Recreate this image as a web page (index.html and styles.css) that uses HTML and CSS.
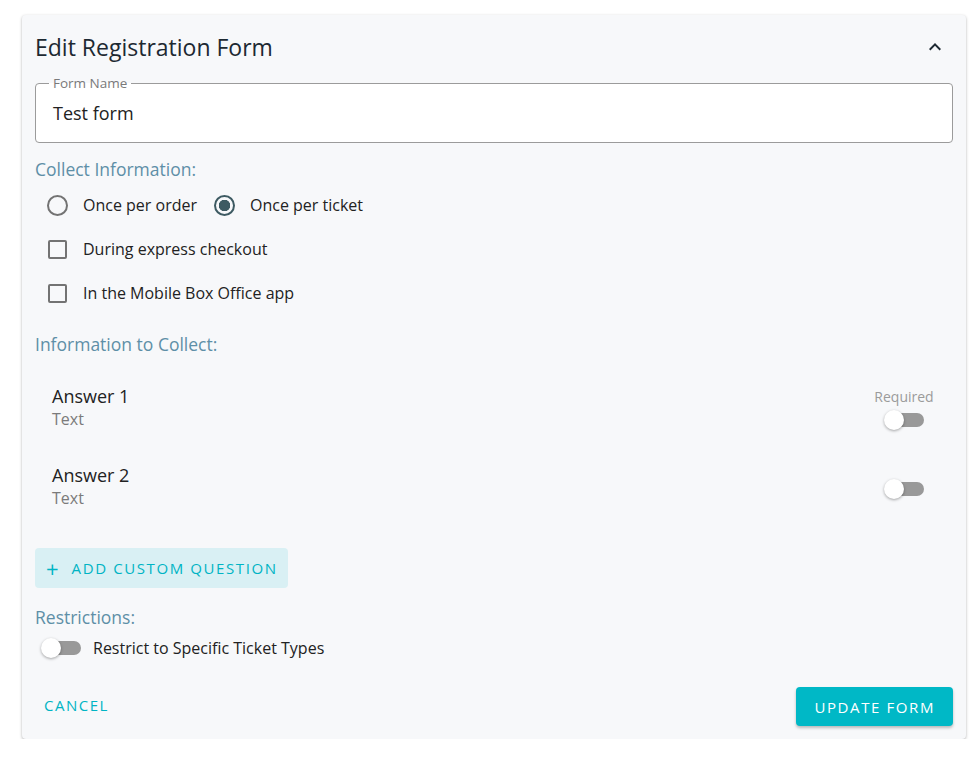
FILE: index.html
```html
<!DOCTYPE html>
<html lang="en">
<head>
    <meta charset="UTF-8">
    <meta name="viewport" content="width=device-width, initial-scale=1.0">
    <title>Edit Registration Form</title>
    <link rel="stylesheet" href="styles.css">
</head>
<body>

    <div class="card">
        <div class="card-header">
            <h1>Edit Registration Form</h1>
            <button class="collapse" aria-label="Collapse">
                <svg viewBox="0 0 24 24" width="24" height="24"><path d="M12 8l-6 6 1.41 1.41L12 10.83l4.59 4.58L18 14z"/></svg>
            </button>
        </div>

        <div class="field">
            <span class="field-label">Form Name</span>
            <span class="field-value">Test form</span>
        </div>

        <h2 class="section-title">Collect Information:</h2>
        <div class="option-row">
            <label class="option">
                <span class="control"><span class="radio"></span></span>
                <span class="option-text">Once per order</span>
            </label>
            <label class="option">
                <span class="control"><span class="radio checked"></span></span>
                <span class="option-text">Once per ticket</span>
            </label>
        </div>
        <div class="option-row">
            <label class="option">
                <span class="control"><span class="checkbox"></span></span>
                <span class="option-text">During express checkout</span>
            </label>
        </div>
        <div class="option-row">
            <label class="option">
                <span class="control"><span class="checkbox"></span></span>
                <span class="option-text">In the Mobile Box Office app</span>
            </label>
        </div>

        <h2 class="section-title info-title">Information to Collect:</h2>
        <div class="question">
            <div class="question-info">
                <div class="question-name">Answer 1</div>
                <div class="question-type">Text</div>
            </div>
            <div class="question-side">
                <span class="required-label">Required</span>
                <span class="switch"><span class="track"></span><span class="thumb"></span></span>
            </div>
        </div>
        <div class="question">
            <div class="question-info">
                <div class="question-name">Answer 2</div>
                <div class="question-type">Text</div>
            </div>
            <div class="question-side">
                <span class="switch"><span class="track"></span><span class="thumb"></span></span>
            </div>
        </div>

        <button class="add-question"><span class="plus">+</span>Add Custom Question</button>

        <h2 class="section-title restrict-title">Restrictions:</h2>
        <div class="restrict-row">
            <span class="switch"><span class="track"></span><span class="thumb"></span></span>
            <span class="option-text">Restrict to Specific Ticket Types</span>
        </div>

        <div class="card-actions">
            <button class="btn-text">Cancel</button>
            <button class="btn-primary">Update Form</button>
        </div>
    </div>

</body>
</html>
```

FILE: styles.css
```css
body {
    margin: 0;
    padding: 15px 8px 0 22px;
    font-family: 'Open Sans', 'Noto Sans', sans-serif;
    background: #fff;
    color: #222;
}
.card {
    background: #f7f8fa;
    border-radius: 4px;
    box-shadow: 0px 1px 3px rgba(0, 0, 0, 0.3);
    padding: 0 13px 13px 13px;
}
.card-header {
    display: flex;
    align-items: center;
    justify-content: space-between;
    height: 64px;
    margin-bottom: 4px;
}
h1 {
    margin: 0;
    font-size: 23px;
    font-weight: 400;
    color: #1d2932;
}
.collapse {
    background: none;
    border: none;
    padding: 0;
    margin-right: 6px;
    width: 24px;
    height: 24px;
    cursor: pointer;
}
.collapse svg {
    display: block;
    fill: #1d2932;
}
.field {
    position: relative;
    display: flex;
    align-items: center;
    height: 58px;
    padding: 0 17px;
    background: #fff;
    border: 1px solid #9b9b9b;
    border-radius: 4px;
}
.field-label {
    position: absolute;
    top: -9px;
    left: 13px;
    padding: 0 4px;
    font-size: 13.5px;
    line-height: 16px;
    color: #7a7a7a;
    background: linear-gradient(#f7f8fa 50%, #fff 50%);
}
.field-value {
    font-size: 18px;
}
.section-title {
    margin: 14px 0 2px 0;
    font-size: 17.5px;
    line-height: 24px;
    font-weight: 400;
    color: #5e8fa7;
}
.info-title {
    margin-top: 17px;
}
.restrict-title {
    margin: 17px 0 0 0;
}
.option-row {
    display: flex;
    align-items: center;
    height: 44px;
}
.option {
    display: flex;
    align-items: center;
    margin-right: 5px;
    cursor: pointer;
}
.control {
    display: flex;
    align-items: center;
    justify-content: center;
    width: 44px;
    height: 44px;
}
.option-text {
    margin-left: 4px;
    font-size: 16px;
    color: #222;
}
.radio {
    box-sizing: border-box;
    width: 21px;
    height: 21px;
    border: 2px solid #737373;
    border-radius: 50%;
}
.radio.checked {
    border-color: #3d5a62;
    background: radial-gradient(circle, #3d5a62 0 5.5px, transparent 6px);
}
.checkbox {
    box-sizing: border-box;
    width: 19px;
    height: 19px;
    border: 2px solid #737373;
    border-radius: 2px;
}
.question {
    display: flex;
    align-items: center;
    justify-content: space-between;
    height: 49px;
    padding: 15px 17px;
}
.info-title + .question {
    margin-top: 14px;
}
.question-info {
    margin-top: -4px;
}
.question-name {
    font-size: 18px;
    line-height: 23px;
}
.question-type {
    font-size: 16px;
    line-height: 22px;
    color: #7b7b7b;
}
.question-side {
    display: flex;
    flex-direction: column;
    align-items: center;
    gap: 4px;
    width: 64px;
}
.required-label {
    font-size: 14px;
    line-height: 16px;
    color: #9b9b9b;
}
.switch {
    position: relative;
    display: inline-block;
    width: 40px;
    height: 22px;
}
.track {
    position: absolute;
    top: 4px;
    left: 2px;
    right: 0;
    height: 14px;
    border-radius: 7px;
    background: #999;
}
.thumb {
    position: absolute;
    top: 1px;
    left: 0;
    width: 20px;
    height: 20px;
    border-radius: 50%;
    background: #fff;
    box-shadow: 0px 1px 3px rgba(0, 0, 0, 0.35);
}
.add-question {
    display: flex;
    align-items: center;
    height: 40px;
    margin-top: 20px;
    padding: 0 10px 0 11px;
    background: #d9f0f4;
    border: none;
    border-radius: 4px;
    font-family: inherit;
    font-size: 15px;
    letter-spacing: 1.6px;
    text-transform: uppercase;
    color: #00b4c4;
    cursor: pointer;
}
.plus {
    font-size: 22px;
    font-weight: 400;
    margin-right: 13px;
    letter-spacing: 0;
}
.restrict-row {
    display: flex;
    align-items: center;
    height: 38px;
    padding-left: 6px;
}
.restrict-row .option-text {
    margin-left: 12px;
}
.card-actions {
    display: flex;
    align-items: center;
    justify-content: space-between;
    margin-top: 20px;
}
.btn-text {
    background: none;
    border: none;
    padding: 8px 9px;
    margin-bottom: 3px;
    font-family: inherit;
    font-size: 15px;
    letter-spacing: 1.5px;
    text-transform: uppercase;
    color: #00b4c4;
    cursor: pointer;
}
.btn-primary {
    height: 39px;
    padding: 0 18px;
    background: #00b8c6;
    border: none;
    border-radius: 4px;
    box-shadow: 0px 2px 3px rgba(0, 0, 0, 0.25);
    font-family: inherit;
    font-size: 15px;
    letter-spacing: 1.6px;
    text-transform: uppercase;
    color: #fff;
    cursor: pointer;
}
```
